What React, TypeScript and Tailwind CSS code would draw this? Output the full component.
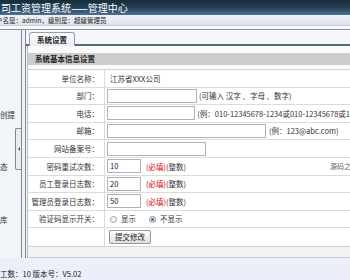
import React from "react";

const FONT = '"Noto Sans CJK SC", "Liberation Sans", sans-serif';

type Row = { label: string; content: React.ReactNode };

const Input = ({ w, value }: { w: string; value?: string }) => (
    <div className={`${w} h-[14px] border border-[#aab2bb] bg-white px-[2px] text-[7.5px] leading-[12px] text-[#222]`}>
        {value}
    </div>
);

const Required = () => (
    <span className="ml-[5px] whitespace-nowrap">
        <span className="text-[#e00000]">(必填)</span>
        <span className="text-[#333]">(整数)</span>
    </span>
);

const rows: Row[] = [
    { label: "单位名称：", content: <span className="ml-[3px]">江苏省XXX公司</span> },
    {
        label: "部门：",
        content: (
            <>
                <Input w="w-[90px]" />
                <span className="ml-[2px] whitespace-nowrap">(可输入 汉字 、字母 、数字)</span>
            </>
        ),
    },
    {
        label: "电话：",
        content: (
            <>
                <Input w="w-[114px]" />
                <span className="ml-[2px] whitespace-nowrap">(例：010-12345678-1234或010-12345678或1</span>
            </>
        ),
    },
    {
        label: "邮箱：",
        content: (
            <>
                <Input w="w-[159px]" />
                <span className="ml-[3px] whitespace-nowrap">(例：123@abc.com)</span>
            </>
        ),
    },
    { label: "网站备案号：", content: <Input w="w-[99px]" /> },
    {
        label: "密码重试次数：",
        content: (
            <>
                <Input w="w-[34px]" value="10" />
                <Required />
                <span className="ml-auto mr-[-8px] whitespace-nowrap text-[7px] text-[#666]">源码之家</span>
            </>
        ),
    },
    {
        label: "员工登录日志数：",
        content: (
            <>
                <Input w="w-[34px]" value="20" />
                <Required />
            </>
        ),
    },
    {
        label: "管理员登录日志数：",
        content: (
            <>
                <Input w="w-[34px]" value="50" />
                <Required />
            </>
        ),
    },
    {
        label: "验证码显示开关：",
        content: (
            <div className="ml-[3px] flex items-center">
                <span className="h-[7px] w-[7px] rounded-full border border-[#9aa3ad] bg-[#f4f4f4]" />
                <span className="ml-[4px]">显示</span>
                <span className="ml-[13px] flex h-[7px] w-[7px] items-center justify-center rounded-full border border-[#7d8c99] bg-[#f4f4f4]">
                    <span className="h-[3px] w-[3px] rounded-full bg-[#3a6d8c]" />
                </span>
                <span className="ml-[4px] whitespace-nowrap">不显示</span>
            </div>
        ),
    },
    {
        label: "",
        content: (
            <div className="ml-[2px] h-[14px] rounded-[2px] border border-[#8f979f] bg-gradient-to-b from-[#fdfdfd] to-[#dcdfe3] px-[5px] text-[7.5px] leading-[12px] text-[#222]">
                提交修改
            </div>
        ),
    },
];

export default function App() {
    return (
        <div
            className="flex h-[280px] w-[350px] flex-col overflow-hidden bg-white text-[7.5px] text-[#333]"
            style={{ fontFamily: FONT }}
        >
            {/* title bar */}
            <div className="h-[15px] shrink-0 bg-gradient-to-b from-[#182c3c] via-[#233f55] to-[#4d7292] pl-[1px] text-[10px] leading-[15px] whitespace-nowrap text-white">
                司工资管理系统——管理中心
            </div>

            {/* user bar */}
            <div className="h-[11px] shrink-0 overflow-hidden border-b border-[#c8cfd9] bg-gradient-to-b from-[#eef2f7] to-[#dde4ee] text-[6.5px] leading-[10px] whitespace-nowrap text-[#222]">
                <span className="ml-[-4px]">户名是：admin，级别是：超级管理员</span>
            </div>
            <div className="h-[3px] shrink-0 bg-[#f8f9fc]" />
            <div className="h-px shrink-0 bg-[#8d939a]" />

            {/* body */}
            <div className="flex min-h-0 flex-1">
                {/* sidebar */}
                <div className="relative w-[21px] shrink-0 bg-[#f1f4f9] text-[7.5px] text-[#333]">
                    <div className="mt-[79px] whitespace-nowrap">创提</div>
                    <div className="mt-[41px]">态</div>
                    <div className="mt-[41px]">库</div>
                    <div className="absolute right-0 top-[98px] flex h-[42px] w-[6px] items-center justify-center rounded-l-[2px] border border-r-0 border-[#7f8891] bg-[#e9edf2]">
                        <span className="h-0 w-0 border-y-[2px] border-r-[2px] border-y-transparent border-r-[#555]" />
                    </div>
                </div>

                {/* splitter */}
                <div className="w-[5px] shrink-0 border-x border-[#7e8994] bg-[#eef1f6]" />

                {/* main */}
                <div className="flex min-w-0 flex-1 flex-col bg-[#f6f7fa]">
                    {/* tab strip */}
                    <div className="flex h-[16px] shrink-0 items-end">
                        <div className="w-[3px] border-b-2 border-[#4f6d7b]" />
                        <div className="h-[14px] rounded-t-[3px] border border-b-0 border-[#8ea0ad] bg-gradient-to-b from-white to-[#e6ecf1] px-[7px] text-[7.5px] font-bold leading-[13px] text-[#222]">
                            系统设置
                        </div>
                        <div className="flex-1 border-b-2 border-[#4f6d7b]" />
                    </div>

                    {/* panel */}
                    <div className="ml-[1px] flex flex-1 flex-col border-l border-[#b9bec4] bg-[#fafafa] pt-[7px]">
                        <div className="h-[12px] bg-[#cdcdcd] pl-[7px] text-[7.5px] font-bold leading-[12px] text-[#222]">
                            系统基本信息设置
                        </div>
                        <div className="mt-[4px] border-y border-[#cfd2d6] bg-white">
                            {rows.map((r, i) => (
                                <div
                                    key={i}
                                    className={`flex h-[17.6px] ${i < rows.length - 1 ? "border-b border-[#d9dbde]" : ""}`}
                                >
                                    <div className="flex w-[77px] shrink-0 items-center justify-end border-r border-[#d9dbde] pr-[5px] whitespace-nowrap">
                                        {r.label}
                                    </div>
                                    <div className="flex min-w-0 flex-1 items-center overflow-hidden pl-[2px]">
                                        {r.content}
                                    </div>
                                </div>
                            ))}
                        </div>
                        <div className="flex-1 border-b border-[#c9ccd2] bg-[#f3f3f3]" />
                    </div>
                </div>
            </div>

            {/* footer */}
            <div className="h-[22px] shrink-0 bg-[#eceffa] pt-[11px] text-[7.5px] leading-[10px] whitespace-nowrap text-[#222]">
                工数：10 版本号：V5.02
            </div>
        </div>
    );
}
